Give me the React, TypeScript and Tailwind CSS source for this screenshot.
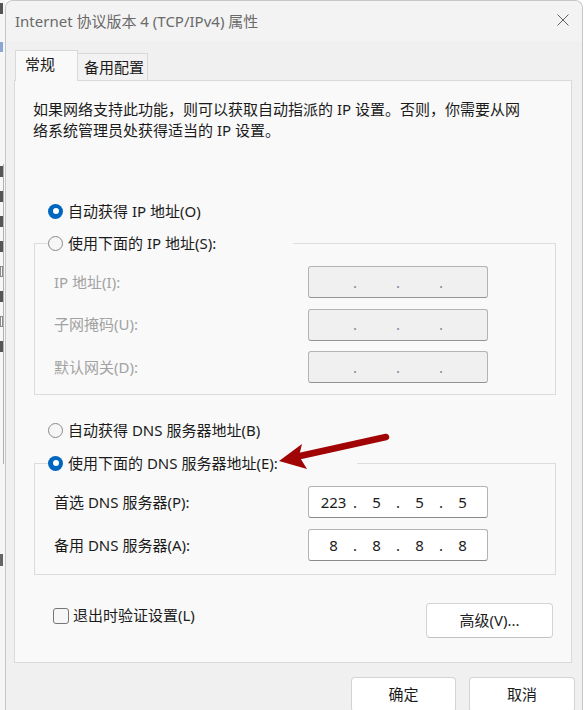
import React, { Fragment } from "react";

const Radio = ({ checked }: { checked?: boolean }) =>
  checked ? (
    <span className="w-[15px] h-[15px] shrink-0 rounded-full bg-[#0067c0] flex items-center justify-center">
      <span className="w-[6px] h-[6px] rounded-full bg-white" />
    </span>
  ) : (
    <span className="w-[15px] h-[15px] shrink-0 rounded-full border border-[#8a8a8a] bg-[#f6f6f6]" />
  );

const IpField = ({ parts, disabled }: { parts: string[]; disabled?: boolean }) => (
  <div
    className={
      disabled
        ? "flex items-center w-[180px] h-[32px] pl-[8px] rounded-[3px] border border-[#b4b4b4] border-b-[#939393] bg-[#f0f0f0] text-[#7c8aa0]"
        : "flex items-center w-[180px] h-[32px] pl-[8px] rounded-[3px] border border-[#b4b4b4] border-b-[#8a8a8a] bg-white text-[#1b1b1b]"
    }
  >
    {parts.map((p, i) => (
      <Fragment key={i}>
        {i > 0 && <span className="w-[10px] text-center">.</span>}
        <span className="w-[33px] text-center">{p}</span>
      </Fragment>
    ))}
  </div>
);

const FieldRow = ({ label, parts, disabled }: { label: string; parts: string[]; disabled?: boolean }) => (
  <div className="flex items-center h-[32px]">
    <span className={disabled ? "w-[254px] text-[#a2a2a2]" : "w-[254px] text-[#1b1b1b]"}>{label}</span>
    <IpField parts={parts} disabled={disabled} />
  </div>
);

// sliver of the window behind the dialog
const BackdropStrip = () => (
  <div className="w-[5px] shrink-0 bg-[#f6f6f6] flex flex-col items-start">
    <div className="w-[3px] h-[11px] mt-[3px] bg-[#555555]" />
    <div className="w-[3px] h-[10px] mt-[28px] bg-[#8aa6d6]" />
    <div className="w-[4px] h-[300px] mt-[112px] border-r border-[#b0b0b0] flex flex-col gap-[14px] pt-[2px]">
      {[1, 1, 1, 1, 0, 1, 0, 1].map((c, i) => (
        <div key={i} className={c ? "w-[3px] h-[11px] bg-[#555555]" : "w-[3px] h-[11px] border border-[#8a8a8a]"} />
      ))}
    </div>
    <div className="w-[3px] h-[12px] mt-[90px] bg-[#666666]" />
  </div>
);

export default function App() {
  return (
    <div className="relative w-[586px] h-[710px] overflow-hidden bg-white flex font-['Noto_Sans','Noto_Sans_CJK_SC',sans-serif] text-[15px] leading-[21px] text-[#1b1b1b]">
      <BackdropStrip />

      <div className="w-[578px] shrink-0 h-[720px] flex flex-col bg-[#f0f0f0] border border-b-0 border-[#c6c6c6] rounded-t-[8px] overflow-hidden">
        {/* title bar */}
        <div className="h-[40px] shrink-0 bg-[#f3f3f3] flex items-center justify-between pl-[9px] pr-[13px]">
          <span className="text-[15px] leading-[20px] text-[#6a6a6a]">Internet 协议版本 4 (TCP/IPv4) 属性</span>
          <svg width="12" height="12" viewBox="0 0 12 12" className="mt-[-2px]">
            <path d="M0.5 0.5 L11.5 11.5 M11.5 0.5 L0.5 11.5" stroke="#5f5f5f" strokeWidth="1" />
          </svg>
        </div>

        <div className="flex flex-col pl-[8px] pt-[9px]">
          {/* tabs */}
          <div className="flex items-end h-[30px]">
            <div className="relative z-10 ml-[1px] mb-[-1px] w-[63px] h-[31px] pt-[3px] pl-[9px] bg-[#f9f9f9] border border-b-0 border-[#d9d9d9]">
              常规
            </div>
            <div className="w-[70px] h-[27px] pt-[3px] pl-[6px] bg-[#f2f2f2] border border-b-0 border-l-0 border-[#d9d9d9]">
              备用配置
            </div>
          </div>

          {/* tab panel */}
          <div className="w-[558px] h-[583px] bg-[#f9f9f9] border border-[#dadada] flex flex-col">
            <p className="mt-[18px] ml-[18px] whitespace-nowrap">
              如果网络支持此功能，则可以获取自动指派的 IP 设置。否则，你需要从网
              <br />
              络系统管理员处获得适当的 IP 设置。
            </p>

            <div className="mt-[60px] ml-[33px] h-[20px] flex items-center gap-[5px]">
              <Radio checked />
              <span>自动获得 IP 地址(O)</span>
            </div>

            <fieldset className="mt-[12px] ml-[19px] w-[522px] border border-[#dcdcdc] pb-[11px]">
              <legend className="ml-[13px] w-[245px] h-[20px] flex items-center gap-[5px]">
                <Radio />
                <span>使用下面的 IP 地址(S):</span>
              </legend>
              <div className="pt-[13px] pl-[19px] flex flex-col gap-[10.5px]">
                <FieldRow label="IP 地址(I):" parts={["", "", "", ""]} disabled />
                <FieldRow label="子网掩码(U):" parts={["", "", "", ""]} disabled />
                <FieldRow label="默认网关(D):" parts={["", "", "", ""]} disabled />
              </div>
            </fieldset>

            <div className="mt-[25px] ml-[33px] h-[20px] flex items-center gap-[5px]">
              <Radio />
              <span>自动获得 DNS 服务器地址(B)</span>
            </div>

            <fieldset className="mt-[13px] ml-[19px] w-[522px] border border-[#dcdcdc] pb-[13px]">
              <legend className="ml-[13px] w-[309px] h-[20px] flex items-center gap-[5px]">
                <Radio checked />
                <span>使用下面的 DNS 服务器地址(E):</span>
              </legend>
              <div className="pt-[13px] pl-[19px] flex flex-col gap-[11px]">
                <FieldRow label="首选 DNS 服务器(P):" parts={["223", "5", "5", "5"]} />
                <FieldRow label="备用 DNS 服务器(A):" parts={["8", "8", "8", "8"]} />
              </div>
            </fieldset>

            <div className="mt-[28px] flex items-start justify-between">
              <label className="ml-[38px] mt-[2px] h-[21px] flex items-center gap-[4px]">
                <span className="w-[16px] h-[16px] rounded-[3px] border border-[#767676] bg-[#f6f6f6]" />
                <span>退出时验证设置(L)</span>
              </label>
              <button className="mr-[18px] w-[127px] h-[35px] bg-white border border-[#d3d3d3] border-b-[#c2c2c2] rounded-[4px]">
                高级(V)...
              </button>
            </div>
          </div>

          {/* dialog buttons */}
          <div className="mt-[14px] pr-[7px] flex justify-end gap-[13px]">
            <button className="w-[105px] h-[35px] bg-white border border-[#d3d3d3] border-b-[#c2c2c2] rounded-[4px]">确定</button>
            <button className="w-[106px] h-[35px] bg-white border border-[#d3d3d3] border-b-[#c2c2c2] rounded-[4px]">取消</button>
          </div>
        </div>
      </div>

      {/* red annotation arrow */}
      <svg className="absolute left-[270px] top-[428px]" width="125" height="50" viewBox="0 0 125 50">
        <line x1="30" y1="28" x2="116" y2="9" stroke="#a10404" strokeWidth="6.5" strokeLinecap="round" />
        <polygon points="9,33 32,16 29,28 37,41" fill="#a10404" />
      </svg>
    </div>
  );
}
